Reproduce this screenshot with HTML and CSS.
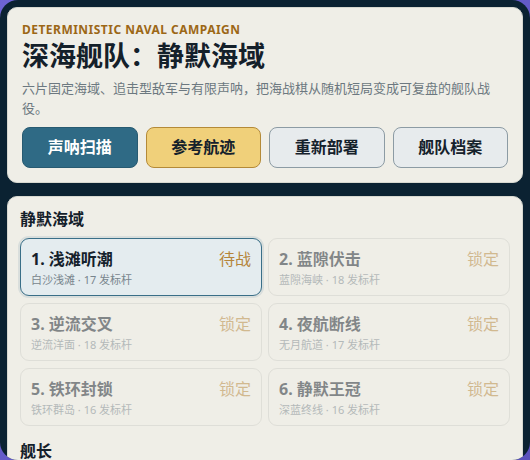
FILE: index.html
```html
<!DOCTYPE html>
<html lang="zh-CN">
<head>
    <meta charset="UTF-8">
    <meta name="viewport" content="width=device-width, initial-scale=1.0">
    <title>深海舰队：静默海域</title>
    <link rel="stylesheet" href="styles.css">
</head>
<body>
    <div class="shell">
        <header class="panel hero">
            <div class="eyebrow">Deterministic Naval Campaign</div>
            <h1 class="hero-title">深海舰队：静默海域</h1>
            <p class="hero-desc">六片固定海域、追击型敌军与有限声呐，把海战棋从随机短局变成可复盘的舰队战役。</p>
            <div class="actions">
                <button class="btn btn-primary">声呐扫描</button>
                <button class="btn btn-gold">参考航迹</button>
                <button class="btn">重新部署</button>
                <button class="btn">舰队档案</button>
            </div>
        </header>

        <main class="panel">
            <h2 class="section-title">静默海域</h2>
            <div class="mission-grid">
                <div class="mission active">
                    <div class="mission-head">
                        <span class="mission-name">1. 浅滩听潮</span>
                        <span class="mission-state">待战</span>
                    </div>
                    <div class="mission-meta">白沙浅滩 · 17 发标杆</div>
                </div>
                <div class="mission locked">
                    <div class="mission-head">
                        <span class="mission-name">2. 蓝隙伏击</span>
                        <span class="mission-state">锁定</span>
                    </div>
                    <div class="mission-meta">蓝隙海峡 · 18 发标杆</div>
                </div>
                <div class="mission locked">
                    <div class="mission-head">
                        <span class="mission-name">3. 逆流交叉</span>
                        <span class="mission-state">锁定</span>
                    </div>
                    <div class="mission-meta">逆流洋面 · 18 发标杆</div>
                </div>
                <div class="mission locked">
                    <div class="mission-head">
                        <span class="mission-name">4. 夜航断线</span>
                        <span class="mission-state">锁定</span>
                    </div>
                    <div class="mission-meta">无月航道 · 17 发标杆</div>
                </div>
                <div class="mission locked">
                    <div class="mission-head">
                        <span class="mission-name">5. 铁环封锁</span>
                        <span class="mission-state">锁定</span>
                    </div>
                    <div class="mission-meta">铁环群岛 · 16 发标杆</div>
                </div>
                <div class="mission locked">
                    <div class="mission-head">
                        <span class="mission-name">6. 静默王冠</span>
                        <span class="mission-state">锁定</span>
                    </div>
                    <div class="mission-meta">深蓝终线 · 16 发标杆</div>
                </div>
            </div>

            <h2 class="section-title captain-title">舰长</h2>
        </main>
    </div>
</body>
</html>
```

FILE: styles.css
```css
* {
    box-sizing: border-box;
}

html,
body {
    height: 100%;
}

body {
    margin: 0;
    background: linear-gradient(135deg, #6d63d4, #5a52bc);
    font-family: "Noto Sans", "Noto Sans CJK SC", sans-serif;
    color: #15212b;
    overflow: hidden;
}

/* dark app frame */
.shell {
    height: 100vh;
    background-color: #0b2232;
    border-radius: 18px;
    padding: 7px;
    overflow: hidden;
    display: flex;
    flex-direction: column;
    gap: 13px;
}

.panel {
    background-color: #efeee7;
    border: 1px solid #d7d8d0;
    border-radius: 10px;
    flex-shrink: 0;
}

/* header */
.hero {
    padding: 14px 14px 14px;
}

.eyebrow {
    font-size: 12px;
    line-height: 16px;
    font-weight: 700;
    letter-spacing: 0.04em;
    text-transform: uppercase;
    color: #9c6716;
}

.hero-title {
    margin: 2px 0 0;
    font-size: 27px;
    line-height: 32px;
    font-weight: 700;
    color: #14202a;
}

.hero-desc {
    margin: 6px 0 0;
    font-size: 13px;
    line-height: 20px;
    color: #6c7880;
}

.actions {
    margin-top: 9px;
    display: grid;
    grid-template-columns: repeat(4, 1fr);
    gap: 8px;
}

.btn {
    font-family: inherit;
    font-size: 16px;
    line-height: 21px;
    font-weight: 700;
    padding: 9px 6px;
    border-radius: 8px;
    border: 1px solid #8c9ba4;
    background-color: #e7ebed;
    color: #15212b;
    cursor: pointer;
}

.btn-primary {
    background-color: #2f6a85;
    border-color: #275a71;
    color: #fff;
}

.btn-gold {
    background-color: #f0d07a;
    border-color: #b48a38;
}

/* missions */
main.panel {
    padding: 12px 12px 20px;
}

.section-title {
    margin: 0;
    font-size: 16px;
    line-height: 20px;
    font-weight: 700;
    color: #14202a;
}

.mission-grid {
    margin-top: 9px;
    display: grid;
    grid-template-columns: 1fr 1fr;
    gap: 7px 6px;
}

.mission {
    border: 1px solid #cfd0ca;
    border-radius: 9px;
    padding: 9px 10px 8px;
}

.mission.active {
    background-color: #e4ecef;
    border-color: #3a6f88;
    box-shadow: 0 0 0 2px rgba(58, 111, 136, 0.12);
}

.mission.locked {
    opacity: 0.5;
}

.mission-head {
    display: flex;
    justify-content: space-between;
    align-items: center;
}

.mission-name {
    font-size: 16px;
    line-height: 22px;
    font-weight: 700;
}

.mission-state {
    font-size: 16px;
    line-height: 22px;
    color: #b5853a;
}

.mission-meta {
    margin-top: 3px;
    font-size: 11px;
    line-height: 14px;
    color: #78858d;
}

.captain-title {
    margin-top: 15px;
}
```
